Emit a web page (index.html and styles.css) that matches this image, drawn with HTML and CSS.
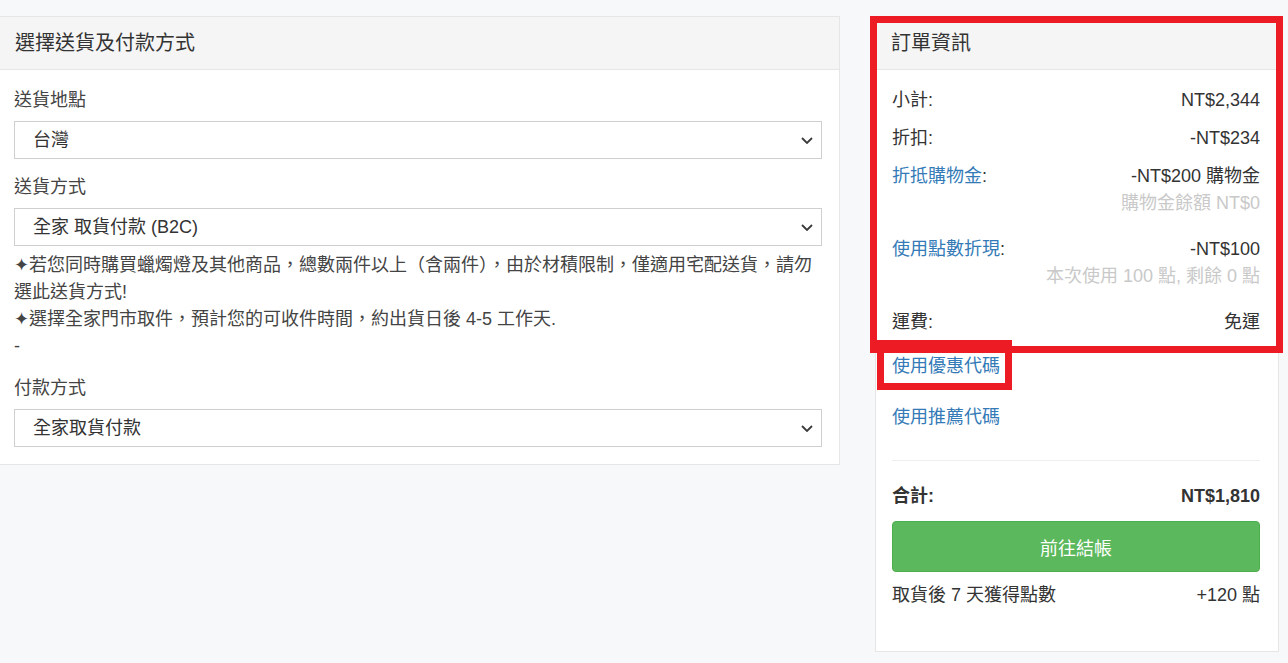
FILE: index.html
```html
<!DOCTYPE html>
<html lang="zh-TW">
<head>
    <meta charset="UTF-8">
    <meta name="viewport" content="width=device-width, initial-scale=1.0">
    <title>結帳</title>
    <link rel="stylesheet" href="styles.css">
</head>
<body>
    <div class="checkout">
        <div class="col-main">
            <div class="panel">
                <div class="panel-heading">選擇送貨及付款方式</div>
                <div class="panel-body">
                    <div class="form-group">
                        <label class="form-label">送貨地點</label>
                        <div class="select-wrap">
                            <select class="form-select"><option>台灣</option></select>
                            <svg class="select-arrow" width="12" height="7" viewBox="0 0 12 7"><path d="M1 1 L6 6 L11 1" fill="none" stroke="#3a3a3a" stroke-width="1.8"/></svg>
                        </div>
                    </div>

                    <div class="form-group">
                        <label class="form-label">送貨方式</label>
                        <div class="select-wrap">
                            <select class="form-select"><option>全家 取貨付款 (B2C)</option></select>
                            <svg class="select-arrow" width="12" height="7" viewBox="0 0 12 7"><path d="M1 1 L6 6 L11 1" fill="none" stroke="#3a3a3a" stroke-width="1.8"/></svg>
                        </div>
                        <div class="ship-note">
                            <p>✦若您同時購買蠟燭燈及其他商品，總數兩件以上（含兩件），由於材積限制，僅適用宅配送貨，請勿選此送貨方式!</p>
                            <p>✦選擇全家門市取件，預計您的可收件時間，約出貨日後 4-5 工作天.</p>
                            <p>-</p>
                        </div>
                    </div>

                    <div class="form-group last">
                        <label class="form-label">付款方式</label>
                        <div class="select-wrap">
                            <select class="form-select"><option>全家取貨付款</option></select>
                            <svg class="select-arrow" width="12" height="7" viewBox="0 0 12 7"><path d="M1 1 L6 6 L11 1" fill="none" stroke="#3a3a3a" stroke-width="1.8"/></svg>
                        </div>
                    </div>
                </div>
            </div>
        </div>

        <div class="col-side">
            <div class="panel order-panel">
                <div class="panel-heading">訂單資訊</div>
                <div class="panel-body">
                    <div class="sum-row">
                        <span>小計:</span>
                        <span>NT$2,344</span>
                    </div>
                    <div class="sum-row">
                        <span>折扣:</span>
                        <span>-NT$234</span>
                    </div>
                    <div class="sum-row has-note">
                        <div class="sum-line">
                            <span><a class="link" href="#">折抵購物金</a>:</span>
                            <span>-NT$200 購物金</span>
                        </div>
                        <div class="sum-note">購物金餘額 NT$0</div>
                    </div>
                    <div class="sum-row has-note">
                        <div class="sum-line">
                            <span><a class="link" href="#">使用點數折現</a>:</span>
                            <span>-NT$100</span>
                        </div>
                        <div class="sum-note">本次使用 100 點, 剩餘 0 點</div>
                    </div>
                    <div class="sum-row shipping">
                        <span>運費:</span>
                        <span>免運</span>
                    </div>

                    <a class="link code-link" href="#">使用優惠代碼</a>
                    <a class="link code-link" href="#">使用推薦代碼</a>

                    <hr class="divider">

                    <div class="sum-row total">
                        <span>合計:</span>
                        <span>NT$1,810</span>
                    </div>
                    <button class="btn-checkout" type="button">前往結帳</button>
                    <div class="sum-row points">
                        <span>取貨後 7 天獲得點數</span>
                        <span>+120 點</span>
                    </div>
                </div>
            </div>
        </div>
    </div>

    <!-- 標註框 -->
    <div class="mark mark-summary"></div>
    <div class="mark mark-coupon"></div>
</body>
</html>
```

FILE: styles.css
```css
:root {
    --text-color: #333;
    --label-color: #444;
    --muted-color: #c9c9c9;
    --link-color: #337ab7;
    --border-color: #e6e6e6;
    --heading-bg: #f5f5f5;
    --mark-color: #ed1c24;
}

body {
    margin: 0;
    background: #f7f8fa;
    font-family: 'Liberation Sans', 'Noto Sans CJK TC', sans-serif;
    font-size: 18px;
    line-height: 27px;
    color: var(--text-color);
}

.checkout {
    display: flex;
    align-items: flex-start;
    padding-top: 16px;
}

.col-main {
    width: 841px;
    margin-left: -1px;
}

.col-side {
    width: 404px;
    margin-left: 35px;
}

.panel {
    background: white;
    border: 1px solid var(--border-color);
}

.panel-heading {
    background: var(--heading-bg);
    border-bottom: 1px solid var(--border-color);
    padding: 11px 15px;
    font-size: 20px;
    line-height: 30px;
    color: #333;
}

.col-main .panel-body {
    padding: 17px 17px 17px 14px;
}

.form-group {
    margin-bottom: 15px;
}

.form-group.last {
    margin-bottom: 0;
}

.form-label {
    display: block;
    margin-bottom: 7px;
    color: var(--label-color);
}

.select-wrap {
    position: relative;
}

.form-select {
    display: block;
    width: 100%;
    height: 38px;
    margin: 0;
    padding: 0 18px;
    border: 1px solid #cfcfcf;
    border-radius: 0;
    background: white;
    font-family: inherit;
    font-size: 18px;
    color: var(--text-color);
    -webkit-appearance: none;
    appearance: none;
}

.select-arrow {
    position: absolute;
    right: 9px;
    top: 16px;
    pointer-events: none;
}

.ship-note {
    margin-top: 6px;
    color: var(--label-color);
}

.ship-note p {
    margin: 0;
    margin-right: -4px;
}

.order-panel .panel-body {
    padding: 17px 18px 42px 16px;
}

.sum-row,
.sum-line {
    display: flex;
    justify-content: space-between;
}

.sum-row {
    margin-bottom: 11px;
}

.sum-row.has-note {
    display: block;
    margin-bottom: 19px;
}

.sum-note {
    text-align: right;
    color: var(--muted-color);
}

.sum-row.shipping {
    margin-bottom: 17px;
}

.link {
    color: var(--link-color);
    text-decoration: none;
}

.code-link {
    display: block;
    width: max-content;
    margin-bottom: 24px;
}

.code-link + .code-link {
    margin-bottom: 0;
}

.divider {
    margin: 29px 0 22px;
    border: 0;
    border-top: 1px solid #eee;
}

.sum-row.total {
    font-weight: 700;
}

.btn-checkout {
    display: block;
    width: 100%;
    height: 51px;
    margin-bottom: 10px;
    border: 1px solid #4cae4c;
    border-radius: 4px;
    background: #5cb85c;
    color: white;
    font-family: inherit;
    font-size: 18px;
    cursor: pointer;
}

.sum-row.points {
    margin-bottom: 0;
}

.mark {
    position: absolute;
    border: 7px solid var(--mark-color);
    box-sizing: border-box;
    pointer-events: none;
}

.mark-summary {
    left: 870px;
    top: 16px;
    width: 413px;
    height: 337px;
}

.mark-coupon {
    left: 877px;
    top: 340px;
    width: 135px;
    height: 50px;
}
```
